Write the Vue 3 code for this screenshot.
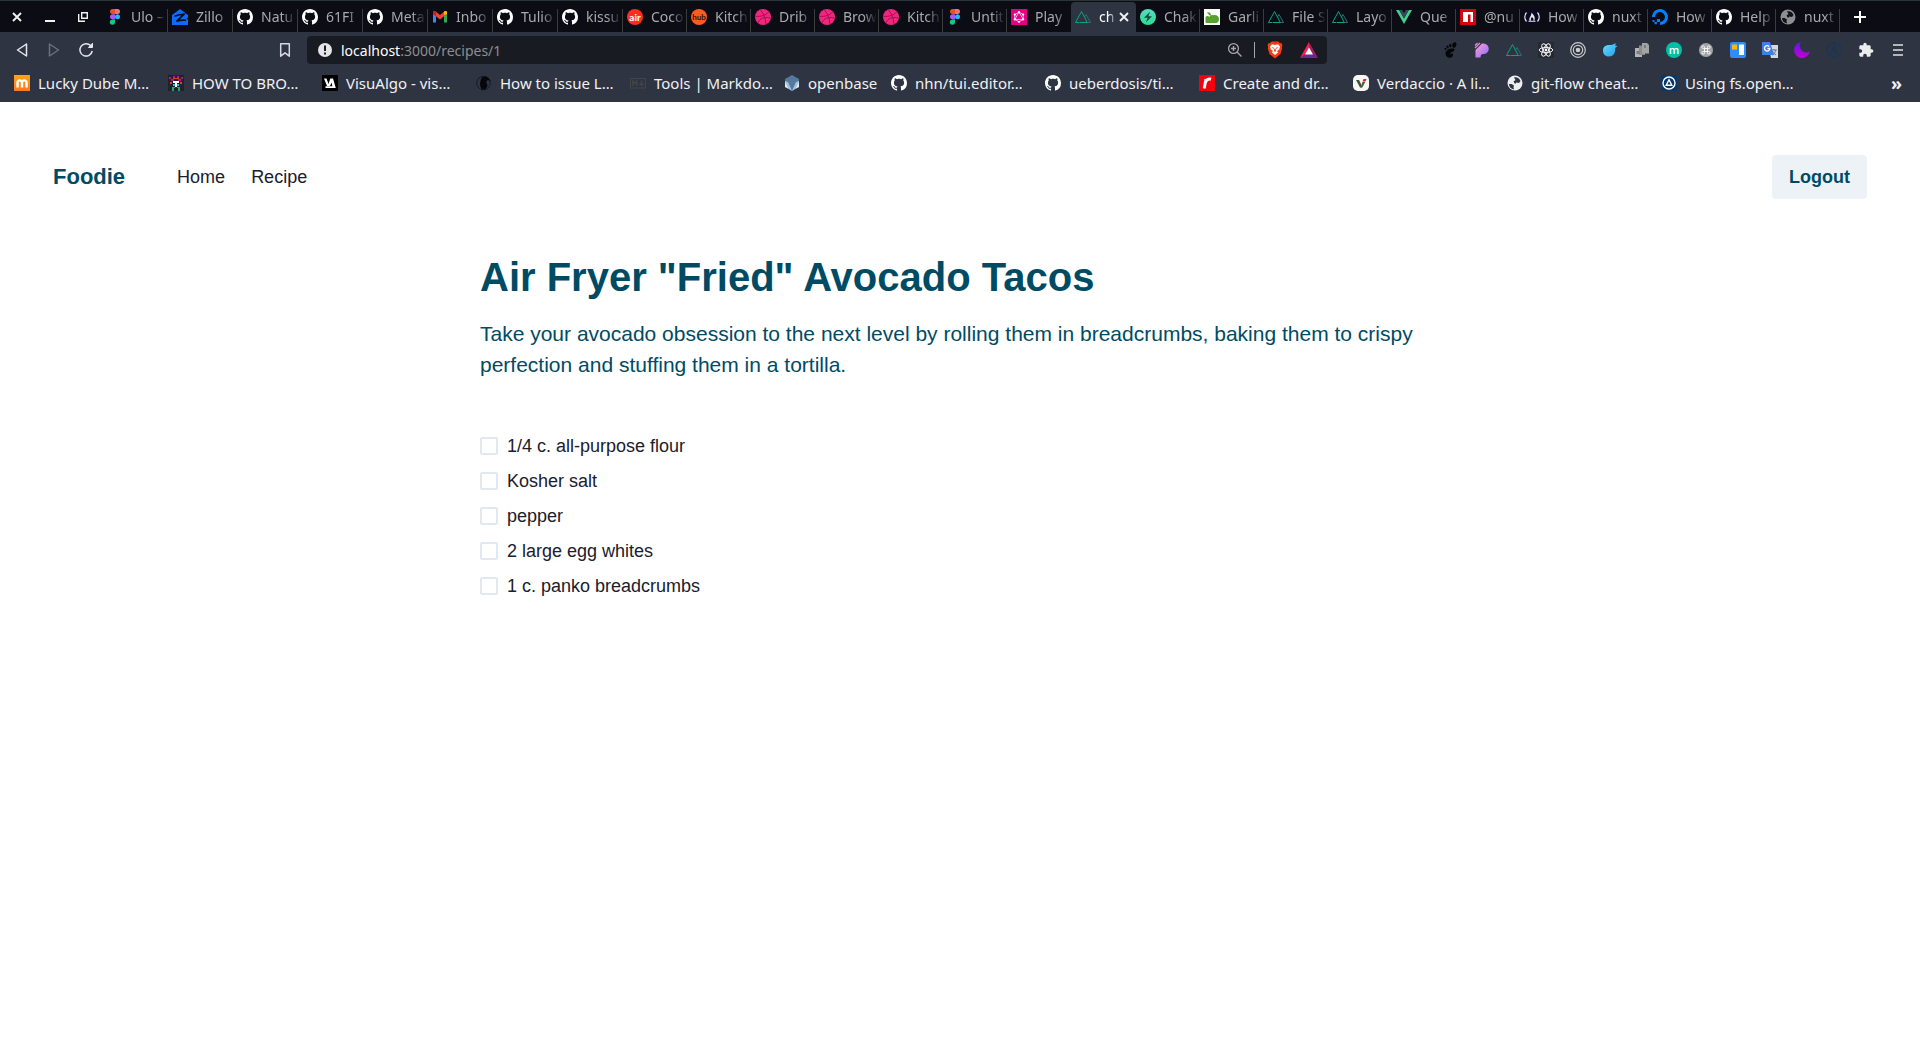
<script setup>
import { ref } from 'vue'

const tabs = [
  { icon: 'figma', title: 'Ulo –' },
  { icon: 'zillow', title: 'Zillo' },
  { icon: 'github', title: 'Natu' },
  { icon: 'github', title: '61FI' },
  { icon: 'github', title: 'Meta' },
  { icon: 'gmail', title: 'Inbo' },
  { icon: 'github', title: 'Tulio' },
  { icon: 'github', title: 'kissu' },
  { letters: 'air', title: 'Coco' },
  { letters: 'hub', title: 'Kitch' },
  { icon: 'dribbble', title: 'Drib' },
  { icon: 'dribbble', title: 'Brow' },
  { icon: 'dribbble', title: 'Kitch' },
  { icon: 'figma', title: 'Untit' },
  { icon: 'graphql', title: 'Play' },
  { icon: 'nuxt', title: 'ch', active: true },
  { icon: 'chakra', title: 'Chak' },
  { icon: 'garlic', title: 'Garli' },
  { icon: 'nuxt', title: 'File S' },
  { icon: 'nuxt', title: 'Layo' },
  { icon: 'vue', title: 'Que' },
  { icon: 'npm', title: '@nu' },
  { icon: 'fcc', title: 'How' },
  { icon: 'github', title: 'nuxt' },
  { icon: 'ocean', title: 'How' },
  { icon: 'github', title: 'Help' },
  { icon: 'globe', title: 'nuxt' },
]

const bookmarks = [
  { icon: 'mdown', title: 'Lucky Dube M…' },
  { icon: 'pixel', title: 'HOW TO BRO…' },
  { icon: 'visualgo', title: 'VisuAlgo - vis…' },
  { icon: 'raven', title: 'How to issue L…' },
  { icon: 'markdown', title: 'Tools | Markdo…' },
  { icon: 'openbase', title: 'openbase', short: true },
  { icon: 'github', title: 'nhn/tui.editor…' },
  { icon: 'github', title: 'ueberdosis/ti…' },
  { icon: 'red-r', title: 'Create and dr…' },
  { icon: 'verdaccio', title: 'Verdaccio · A li…' },
  { icon: 'globe-light', title: 'git-flow cheat…' },
  { icon: 'fs', title: 'Using fs.open…' },
]

const extensions = [
  { icon: 'gnome' },
  { icon: 'pdot' },
  { icon: 'nuxt' },
  { icon: 'react' },
  { icon: 'target' },
  { icon: 'bird' },
  { icon: 'copies' },
  { letters: 'm' },
  { icon: 'command' },
  { icon: 'board' },
  { icon: 'translate' },
  { icon: 'moon' },
  { icon: 'apollo' },
  { icon: 'puzzle' },
]

const path = ref(':3000/recipes/1')

const ingredients = ref([
  { name: '1/4 c. all-purpose flour', checked: false },
  { name: 'Kosher salt', checked: false },
  { name: 'pepper', checked: false },
  { name: '2 large egg whites', checked: false },
  { name: '1 c. panko breadcrumbs', checked: false },
])
</script>

<template>
  <svg class="sprite" aria-hidden="true">
    <defs>
      <linearGradient id="g-chakra" x1="0" y1="0" x2="0" y2="1"><stop offset="0" stop-color="#5bd9c4" /><stop offset="1" stop-color="#27dd8e" /></linearGradient>
      <linearGradient id="g-pdot" x1="0" y1="0" x2="1" y2="1"><stop offset="0" stop-color="#ff9ed2" /><stop offset="1" stop-color="#8c6cff" /></linearGradient>
      <linearGradient id="g-moon" x1="0" y1="0" x2="0" y2="1"><stop offset="0" stop-color="#5a1be8" /><stop offset="1" stop-color="#c400d6" /></linearGradient>
      <linearGradient id="g-bird" x1="0" y1="0" x2="1" y2="1"><stop offset="0" stop-color="#6fdcff" /><stop offset="1" stop-color="#1b9fe8" /></linearGradient>
      <linearGradient id="g-mdown" x1="0" y1="0" x2="0" y2="1"><stop offset="0" stop-color="#ffa21a" /><stop offset="1" stop-color="#ff7a1a" /></linearGradient>
    </defs>
    <symbol id="i-figma" viewBox="0 0 16 16">
      <path d="M5.500 0H8v5H5.500a2.500 2.500 0 0 1 0-5z" fill="#f24e1e" />
      <path d="M8 0h2.500a2.500 2.500 0 0 1 0 5H8z" fill="#ff7262" />
      <path d="M5.500 5.300H8v5H5.500a2.500 2.500 0 0 1 0-5z" fill="#a259ff" />
      <circle cx="10.500" cy="7.800" r="2.500" fill="#1abcfe" />
      <path d="M5.500 10.600H8v2.700a2.600 2.600 0 1 1-2.500-2.700z" fill="#0acf83" />
    </symbol>
    <symbol id="i-zillow" viewBox="0 0 16 16">
      <path d="M8 0l8 6v2.500L14.500 10v.500L16 10v6H0V6z" fill="#0a6cff" />
      <path d="M2.500 7.300C6 5.800 9 5.200 12 5.200L4.500 12.300c3.500-1.200 6.500-1.300 9.500-1" fill="none" stroke="#0b0c14" stroke-width="1.600" />
    </symbol>
    <symbol id="i-github" viewBox="0 0 16 16">
      <path fill="#fff" d="M8 0C3.580 0 0 3.580 0 8c0 3.540 2.290 6.530 5.470 7.590.4.070.55-.17.55-.38 0-.19-.01-.82-.01-1.490-2.010.37-2.530-.49-2.690-.94-.09-.23-.48-.94-.82-1.130-.28-.15-.68-.52-.01-.53.63-.01 1.080.58 1.230.82.72 1.210 1.870.87 2.330.66.07-.52.28-.87.51-1.070-1.780-.2-3.640-.89-3.640-3.950 0-.87.31-1.590.82-2.150-.08-.2-.36-1.020.08-2.120 0 0 .67-.21 2.200.82.64-.18 1.320-.27 2-.27s1.360.09 2 .27c1.530-1.040 2.200-.82 2.200-.82.44 1.100.16 1.920.08 2.120.51.56.82 1.270.82 2.150 0 3.070-1.870 3.750-3.650 3.950.29.25.54.73.54 1.480 0 1.070-.01 1.930-.01 2.200 0 .21.15.46.55.38A8.010 8.010 0 0 0 16 8c0-4.420-3.580-8-8-8z" />
    </symbol>
    <symbol id="i-gmail" viewBox="0 0 16 16">
      <path d="M1 4v9.500h3V6z" fill="#4285f4" /><path d="M15 4v9.500h-3V6z" fill="#34a853" />
      <path d="M1 5V3.500C1 2 2.700 1.700 3.700 2.400L8 6l4.300-3.600C13.300 1.700 15 2 15 3.500V5l-7 5.500z" fill="#ea4335" />
      <path d="M12 6V2.600l.3-.2C13.300 1.700 15 2 15 3.500V5z" fill="#fbbc04" /><path d="M1 5V3.500C1 2.500 1.700 2 2.500 2L4 3v4.400z" fill="#c5221f" />
    </symbol>
    <symbol id="i-dribbble" viewBox="0 0 16 16">
      <circle cx="8" cy="8" r="8" fill="#f2257f" />
      <g fill="none" stroke="#a3114f" stroke-width="1"><path d="M5.500 1c3.500 4 5 8.500 5.500 14M.8 7.500C6 7.500 11 6.500 13.600 3M3 13.700C5 9 10 7.500 15.200 9" /></g>
    </symbol>
    <symbol id="i-graphql" viewBox="0 0 16 16">
      <path d="M0 0h16v16H0z" fill="#e10086" />
      <g fill="none" stroke="#fff" stroke-width=".7"><path d="M8 3.200l4.200 2.400v4.800L8 12.800l-4.200-2.400V5.600zM8 3.200l4.200 7.200H3.800z" /></g>
      <g fill="#fff"><circle cx="8" cy="3.200" r="1.100" /><circle cx="12.200" cy="5.600" r="1.100" /><circle cx="12.200" cy="10.400" r="1.100" /><circle cx="8" cy="12.800" r="1.100" /><circle cx="3.800" cy="10.400" r="1.100" /><circle cx="3.800" cy="5.600" r="1.100" /></g>
    </symbol>
    <symbol id="i-nuxt" viewBox="0 0 16 16">
      <path d="M11.500 13.500h4L11 5.500 9.300 8.300" fill="none" stroke="#2f6d75" stroke-width="1" stroke-linejoin="round" />
      <path d="M4.500 13.500h-4L6.500 2.500l3 5.500 2.700 5.500H5" fill="none" stroke="#0aa57c" stroke-width="1" stroke-linejoin="round" />
    </symbol>
    <symbol id="i-chakra" viewBox="0 0 16 16"><circle cx="8" cy="8" r="8" fill="url(#g-chakra)" /><path d="M10 2.800L4 8.800h3.600L6 13.200l6-6H8.400z" fill="#174a3c" /></symbol>
    <symbol id="i-garlic" viewBox="0 0 16 16">
      <path d="M0 0h16v16H0z" fill="#fff" /><path d="M1.500 13V8c1-1.500 3-1 4 0 0-1.500 2-2.500 4-1.800C12 5.500 15 7 15 10c0 2.500-1.500 4-3 4H3c-1 0-1.500-.5-1.500-1zM3 3.500c2-.5 3.500 0 4 2.500L5.500 6.500z" fill="#57a032" />
    </symbol>
    <symbol id="i-vue" viewBox="0 0 16 16"><path d="M0 1h3.200L8 9.400 12.800 1H16L8 15z" fill="#41d18f" /><path d="M3.200 1h3L8 4.200 9.800 1h3L8 9.400z" fill="#35495e" /></symbol>
    <symbol id="i-npm" viewBox="0 0 16 16"><path d="M0 0h16v16H0z" fill="#d8000c" /><path d="M3 3h10v10h-2.500V5.500H8V13H3z" fill="#fff" /></symbol>
    <symbol id="i-fcc" viewBox="0 0 16 16">
      <path d="M0 0h16v16H0z" fill="#0a0a23" />
      <path d="M2.500 3.500C.2 6 .2 10 2.500 12.500M13.500 3.500c2.300 2.500 2.300 6.500 0 9" fill="none" stroke="#e8e8ee" stroke-width="1.200" />
      <path d="M7.500 3.500c2.500 2.500 4 5 3 8h-1c.3-1.800-.5-2.500-1.500-3.500-.8 1-1.500 2-1 3.500H5.500C4.500 9 7.500 7 7.500 3.500zM4.500 11.700h7v1h-7z" fill="#e8e8ee" />
    </symbol>
    <symbol id="i-ocean" viewBox="0 0 16 16"><path d="M8 16v-3.100c3.300 0 5.800-3.200 4.600-6.600A4.700 4.700 0 0 0 9.700 3.400C6.300 2.200 3.100 4.700 3.100 8H0C0 2.800 5.100-1.300 10.500.4c2.400.7 4.300 2.700 5.100 5.100C17.300 10.900 13.200 16 8 16zM4.900 9.900H8v3H4.900zM2.500 12.900h2.400v2.400H2.500zM.5 10.900h2v2h-2z" fill="#0080ff" /></symbol>
    <symbol id="i-globe" viewBox="0 0 16 16"><circle cx="8" cy="8" r="7.500" fill="#8e8f92" /><path d="M2 9l2.500 0 2.500 1.500L6.500 12 7 14.500C4 14 2 12 2 9zM7 2.500c3-.7 5.500 1 6.500 3.500L12 8l-2.500-.5L8 9 6.500 6.500 8.500 5z" fill="#101118" /></symbol>
    <symbol id="i-globe-light" viewBox="0 0 16 16"><circle cx="8" cy="8" r="7.500" fill="#eceef0" /><path d="M2 9l2.500 0 2.500 1.500L6.500 12 7 14.500C4 14 2 12 2 9zM7 2.500c3-.7 5.500 1 6.500 3.500L12 8l-2.500-.5L8 9 6.500 6.500 8.500 5z" fill="#2f3443" /></symbol>
    <symbol id="i-mdown" viewBox="0 0 16 16"><path d="M0 0h16v16H0z" fill="url(#g-mdown)" /><path d="M3.500 12.500V7.200a2.300 2.300 0 0 1 4.500 0v5.300M8 7.200a2.300 2.300 0 0 1 4.500 0v5.300" fill="none" stroke="#fff" stroke-width="2.400" /></symbol>
    <symbol id="i-pixel" viewBox="0 0 16 16">
      <path d="M0 0h16v16H0z" fill="#20222e" />
      <path d="M1 2h2v2H1zM5 1h2v2H5zM9 1h2v2H9zM13 2h2v2h-2zM3 4h3v2H3zM10 4h3v2h-3z" fill="#c0108c" />
      <path d="M5 6h6v2H9v4H7V8H5z" fill="#fff" /><path d="M2 7h2v2H2zM12 7h2v2h-2zM5 3h6v1H5z" fill="#e0401c" />
      <path d="M5 9h2v2H5zM9 9h2v2H9z" fill="#24b8d8" /><path d="M4 12h3v1H6v3H4zM9 12h3v4h-2v-3H9z" fill="#18b070" />
    </symbol>
    <symbol id="i-visualgo" viewBox="0 0 16 16"><path d="M0 0h16v16H0z" fill="#000" /><path d="M2 3.500h2.500l2 5.500 1.800-5.500H11L13.800 13H3.500v-1.800h6.800L9.600 7.500 8 11H5z" fill="#fff" /></symbol>
    <symbol id="i-raven" viewBox="0 0 16 16"><circle cx="7.500" cy="8" r="6.800" fill="none" stroke="#171b26" /><path d="M6.500 2C10 .5 13 2 14.500 6.500 12.500 4.500 11 5 10.500 6.500c-.5 2 2 3.500.5 5.500L8.500 15.500 8 13.500l-1.500 1.800C4 12.500 3.500 9 4.500 6 5 4 5.500 2.600 6.500 2z" fill="#06070a" /></symbol>
    <symbol id="i-markdown" viewBox="0 0 16 16"><rect x=".5" y="3.500" width="15" height="9.500" fill="none" stroke="#434445" /><path d="M2.800 11V6l2 2.500 2-2.500v5M11.500 5.500V10M9.500 8.500l2 2 2-2" fill="none" stroke="#434445" stroke-width="1.400" /></symbol>
    <symbol id="i-openbase" viewBox="0 0 16 16"><path d="M8 0l7 4v8l-7 4-7-4V4z" fill="#54799f" /><path d="M1 6l4 8-4-2zM15 6l-4 8 4-2z" fill="#dfeaf5" /><path d="M1 6l3 1 4 9-3-2zM15 6l-3 1-4 9 3-2z" fill="#a8c3de" /></symbol>
    <symbol id="i-red-r" viewBox="0 0 16 16"><path d="M0 0h16v16H0z" fill="#f5000c" /><path d="M5.200 13.500L7 4M6.300 8C7 5 9 3.400 12 4.300" fill="none" stroke="#fff" stroke-width="3" /></symbol>
    <symbol id="i-verdaccio" viewBox="0 0 16 16"><rect width="16" height="16" rx="5" fill="#f7f8f6" /><path d="M3 5h3l2 4 1 3.500H7z" fill="#405236" /><path d="M9.500 7h2.800l-3 5.500H7.500z" fill="#4a5e44" /><path d="M10.500 4h3L12.500 6.500H9.500z" fill="#e02414" /></symbol>
    <symbol id="i-fs" viewBox="0 0 16 16"><path d="M0 0h16v16H0z" fill="#033a6b" /><circle cx="8" cy="8" r="6" fill="none" stroke="#fff" stroke-width="1.400" /><path d="M8 4.800l2.800 5.400H5.200z" fill="none" stroke="#fff" stroke-width="1.400" /></symbol>
    <symbol id="i-gnome" viewBox="0 0 16 16">
      <g fill="#050608"><ellipse cx="12.300" cy="3" rx="2" ry="2.800" transform="rotate(20 12.300 3)" /><ellipse cx="8.300" cy="3.600" rx="1.200" ry="1.800" /><ellipse cx="5.600" cy="5" rx="1" ry="1.500" transform="rotate(-20 5.600 5)" /><ellipse cx="3.500" cy="7" rx=".9" ry="1.200" transform="rotate(-30 3.500 7)" /></g>
      <path d="M12.500 7C9 5.500 3.500 8 3.500 11.500c0 2.500 2 4.300 4 4.300 2.300 0 4-1.600 3.600-3.500-.3-1.300-2-1-2.400.1-1-.8 0-1.800 1.300-2.400 1.500-.6 3-1.800 2.500-3z" fill="#050608" />
    </symbol>
    <symbol id="i-pdot" viewBox="0 0 16 16"><path d="M1.500 8L8 1.500h1.500a5 5 0 0 1 0 10.500C7 12 7 13 6.500 15.500h-5z" fill="url(#g-pdot)" /><path d="M1 3.500L3.500 1M1 6l5-5" stroke="#e58bdc" stroke-width="1.200" /></symbol>
    <symbol id="i-react" viewBox="0 0 16 16"><path d="M0 0h16v16H0z" fill="#262932" /><g fill="none" stroke="#f4f4f4"><ellipse cx="8" cy="8" rx="6.800" ry="2.600" /><ellipse cx="8" cy="8" rx="6.800" ry="2.600" transform="rotate(60 8 8)" /><ellipse cx="8" cy="8" rx="6.800" ry="2.600" transform="rotate(120 8 8)" /></g><circle cx="8" cy="8" r="1.400" fill="#fff" /></symbol>
    <symbol id="i-target" viewBox="0 0 16 16"><g fill="none" stroke="#c9cacc" stroke-width="1.200"><circle cx="8" cy="8" r="7.300" /><circle cx="8" cy="8" r="4.700" /></g><circle cx="8" cy="8" r="2.300" fill="#c9cacc" /></symbol>
    <symbol id="i-bird" viewBox="0 0 16 16"><path d="M1 8.500c0-4 3-5.500 6.500-5.500 2 0 3.500-.5 6.500-1.800L13 3.500l2.500.5-2.300 2c.5 5-2.200 8.500-6.200 8.500S1 12 1 8.500z" fill="url(#g-bird)" /></symbol>
    <symbol id="i-copies" viewBox="0 0 16 16"><path d="M1 6h7v9H1z" fill="#b4b4b4" /><path d="M5 3.500h6V13H5z" fill="#8d8d8d" /><path d="M8 1h5l2 2v8.500H8z" fill="#a3a3a3" /><path d="M2.500 9h3v3h-3zM10 3h2v3h-2z" fill="#7c7c7c" /></symbol>
    <symbol id="i-command" viewBox="0 0 16 16"><circle cx="8" cy="8" r="7" fill="#a5a5a5" /><path d="M6.500 6.500h3v3h-3zM6.500 6.500H5.300a1.300 1.300 0 1 1 1.200-1.200zM9.500 6.500V5.300a1.300 1.300 0 1 1 1.200 1.200zM9.500 9.500h1.200a1.300 1.300 0 1 1-1.200 1.200zM6.500 9.500v1.200a1.300 1.300 0 1 1-1.200-1.200z" fill="none" stroke="#f6f6f6" stroke-width="1" /></symbol>
    <symbol id="i-board" viewBox="0 0 16 16"><rect width="16" height="16" rx="2" fill="#2f8cff" /><path d="M2 2.500h5v5H2z" fill="#ffb800" /><path d="M9 2.500h5v10.500H9z" fill="#fff" /></symbol>
    <symbol id="i-translate" viewBox="0 0 16 16"><path d="M6 3h10v13H9z" fill="#d5d9df" /><path d="M9.500 8h5.500M12 7v1M10.500 13c2-1 3-3 3-5M10.500 9c.8 2 2 3 3.500 4" stroke="#61788f" fill="none" /><path d="M0 0h8l4 13H0z" fill="#3f7fe8" /><path d="M7.200 4.500a2.700 2.700 0 1 0 .7 2H5.400" fill="none" stroke="#fff" stroke-width="1.300" /></symbol>
    <symbol id="i-moon" viewBox="0 0 16 16"><path d="M7 0A6.700 6.700 0 0 0 15.900 9.500 8 8 0 1 1 7 0z" fill="url(#g-moon)" /></symbol>
    <symbol id="i-apollo" viewBox="0 0 16 16"><circle cx="8" cy="8" r="7.300" fill="none" stroke="#193654" stroke-width="1.200" /><path d="M5 12l3-8 3 8M6.500 9.500h3" fill="none" stroke="#193654" stroke-width="1.900" /></symbol>
    <symbol id="i-puzzle" viewBox="0 0 24 24"><path fill="#eceded" d="M20.500 11H19V7c0-1.100-.9-2-2-2h-4V3.500C13 2.120 11.880 1 10.500 1S8 2.120 8 3.500V5H4c-1.100 0-1.990.9-1.990 2v3.800H3.500c1.490 0 2.700 1.210 2.700 2.700s-1.210 2.700-2.700 2.700H2V20c0 1.100.9 2 2 2h3.800v-1.500c0-1.490 1.210-2.700 2.700-2.700 1.490 0 2.700 1.210 2.700 2.700V22H17c1.100 0 2-.9 2-2v-4h1.500c1.380 0 2.500-1.120 2.500-2.500S21.880 11 20.500 11z" /></symbol>
    <symbol id="i-lion" viewBox="0 0 16 18">
      <path d="M4.500.5h7l1.500 1.700 1.500-.2 1 2.500-.7 1.700.4 1.200L13.500 13 8 17.500 2.500 13 .8 7.400l.4-1.200-.7-1.700 1-2.500 1.500.2z" fill="#fb3a14" />
      <path d="M5 3.200L8 4l3-.8 2 2.300-.8 3L10 10l1 1.500-3 2.500-3-2.500L6 10 3.800 8.500 3 5.500z" fill="#fff" /><path d="M4.500 6l2.500.8-.5 1.200zM11.500 6L9 6.800l.5 1.200zM7.500 7.500h1L9 10l-1 1-1-1z" fill="#fb3a14" />
    </symbol>
    <symbol id="i-bat" viewBox="0 0 18 16"><path d="M9 0L0 16l9-6z" fill="#ff1f4b" /><path d="M9 0l9 16-9-6z" fill="#9e1f63" /><path d="M0 16h18l-9-6z" fill="#662d91" /><path d="M9 5.500l4 7H5z" fill="#fff" /></symbol>
    <symbol id="i-close" viewBox="0 0 16 16"><path d="M4 4l8 8M12 4l-8 8" stroke="#f2f2f2" stroke-width="1.900" /></symbol>
    <symbol id="i-minimize" viewBox="0 0 16 16"><path d="M3 12h10" stroke="#f2f2f2" stroke-width="2" /></symbol>
    <symbol id="i-restore" viewBox="0 0 16 16"><path d="M6.700 3.700h5.600v5.600H6.700zM3.700 5v7.300H10" fill="none" stroke="#f2f2f2" stroke-width="1.400" /></symbol>
    <symbol id="i-plus" viewBox="0 0 16 16"><path d="M8 2v12M2 8h12" stroke="#fff" stroke-width="2" /></symbol>
    <symbol id="i-back" viewBox="0 0 16 16"><path d="M12.500 2v12L3.500 8z" fill="none" stroke="#e6e7ea" stroke-width="1.500" stroke-linejoin="round" /></symbol>
    <symbol id="i-forward" viewBox="0 0 16 16"><path d="M3.500 2v12l9-6z" fill="none" stroke="#6c7079" stroke-width="1.500" stroke-linejoin="round" /></symbol>
    <symbol id="i-reload" viewBox="0 0 16 16"><path d="M12.600 3.600A6.200 6.200 0 1 0 14.200 9" fill="none" stroke="#e6e7ea" stroke-width="1.500" /><path d="M10.500 5.500h4V1.200z" fill="#e6e7ea" stroke="#e6e7ea" stroke-linejoin="round" /></symbol>
    <symbol id="i-ribbon" viewBox="0 0 16 16"><path d="M3.700 1.700h8.600v12.500L8 10.800l-4.300 3.400z" fill="none" stroke="#d6d8db" stroke-width="1.500" stroke-linejoin="round" /></symbol>
    <symbol id="i-info" viewBox="0 0 16 16"><circle cx="8" cy="8" r="7" fill="#e6e6e6" /><path d="M7 3.500h2V9H7zM7 10.500h2v2H7z" fill="#191b22" /></symbol>
    <symbol id="i-magnify" viewBox="0 0 16 16"><path d="M10 10l4.500 4.500M4 6.500h5M6.500 4v5" stroke="#a6a7aa" stroke-width="1.400" /><circle cx="6.500" cy="6.500" r="4.900" fill="none" stroke="#a6a7aa" stroke-width="1.300" /></symbol>
    <symbol id="i-menu" viewBox="0 0 16 16"><path d="M3 3h10M3 8h10M3 13h10" stroke="#e0e1e3" stroke-width="1.600" /></symbol>
  </svg>

  <header class="browser">
    <div class="tab-strip">
      <div class="window-controls">
        <button type="button" aria-label="Close window"><svg class="icon"><use href="#i-close" /></svg></button>
        <button type="button" aria-label="Minimize"><svg class="icon"><use href="#i-minimize" /></svg></button>
        <button type="button" aria-label="Restore"><svg class="icon"><use href="#i-restore" /></svg></button>
      </div>
      <div
        v-for="(tab, i) in tabs"
        :key="i"
        class="tab"
        :class="{ wide: i < 8, active: tab.active, 'before-active': tabs[i + 1]?.active }"
      >
        <button type="button" class="tab-button">
          <span v-if="tab.letters" class="letters" :class="tab.letters">{{ tab.letters }}</span>
          <svg v-else class="icon" aria-hidden="true"><use :href="'#i-' + tab.icon" /></svg>
          <span class="tab-title">{{ tab.title }}</span>
        </button>
        <button v-if="tab.active" type="button" class="tab-close" aria-label="Close tab">
          <svg class="icon"><use href="#i-close" /></svg>
        </button>
      </div>
      <button type="button" class="new-tab" aria-label="New tab"><svg class="icon"><use href="#i-plus" /></svg></button>
    </div>

    <div class="toolbar">
      <div class="navigation">
        <button type="button" aria-label="Back"><svg class="icon"><use href="#i-back" /></svg></button>
        <button type="button" aria-label="Forward"><svg class="icon"><use href="#i-forward" /></svg></button>
        <button type="button" aria-label="Reload"><svg class="icon"><use href="#i-reload" /></svg></button>
      </div>
      <button type="button" class="save-page" aria-label="Bookmark this page"><svg class="icon"><use href="#i-ribbon" /></svg></button>
      <div class="address">
        <svg class="icon" aria-hidden="true"><use href="#i-info" /></svg>
        <label for="address-path" class="host">localhost</label>
        <input id="address-path" v-model="path" type="text" spellcheck="false">
        <button type="button" aria-label="Zoom"><svg class="icon"><use href="#i-magnify" /></svg></button>
        <span class="divider"></span>
        <button type="button" aria-label="Brave Shields"><svg class="icon-large"><use href="#i-lion" /></svg></button>
        <button type="button" class="rewards" aria-label="Brave Rewards"><svg class="icon-large"><use href="#i-bat" /></svg></button>
      </div>
      <div class="extensions">
        <button v-for="(item, i) in extensions" :key="i" type="button" :aria-label="item.icon || item.letters">
          <span v-if="item.letters" class="letters" :class="item.letters">{{ item.letters }}</span>
          <svg v-else class="icon"><use :href="'#i-' + item.icon" /></svg>
        </button>
        <button type="button" aria-label="Menu"><svg class="icon"><use href="#i-menu" /></svg></button>
      </div>
    </div>

    <nav class="bookmarks" aria-label="Bookmarks">
      <a v-for="mark in bookmarks" :key="mark.title" href="#" :class="{ short: mark.short }">
        <svg class="icon" aria-hidden="true"><use :href="'#i-' + mark.icon" /></svg>
        <span>{{ mark.title }}</span>
      </a>
      <button type="button" class="more">»</button>
    </nav>
  </header>

  <nav class="navbar">
    <a href="#" class="brand">Foodie</a>
    <a href="#">Home</a>
    <a href="#">Recipe</a>
    <button type="button" class="logout">Logout</button>
  </nav>
  <main class="recipe">
    <h1>Air Fryer "Fried" Avocado Tacos</h1>
    <p>Take your avocado obsession to the next level by rolling them in breadcrumbs, baking them to crispy perfection and stuffing them in a tortilla.</p>
    <ul>
      <li v-for="item in ingredients" :key="item.name">
        <label><input v-model="item.checked" type="checkbox">{{ item.name }}</label>
      </li>
    </ul>
  </main>
</template>

<style>
body {
  background: #fff;
}
</style>

<style scoped>
* {
  box-sizing: border-box;
}

.sprite {
  position: absolute;
  width: 0;
  height: 0;
}

button {
  padding: 0;
  border: 0;
  background: none;
  color: inherit;
  font: inherit;
  cursor: pointer;
}

a {
  color: inherit;
  text-decoration: none;
}

.icon {
  display: block;
  flex: none;
  width: 16px;
  height: 16px;
}

.icon-large {
  display: block;
  width: 18px;
  height: 18px;
}

.letters {
  display: flex;
  flex: none;
  align-items: center;
  justify-content: center;
  width: 16px;
  height: 16px;
  border-radius: 8px;
  color: #fff;
  font-family: Lato, sans-serif;
  font-size: 10px;
  font-weight: 700;
  line-height: 14px;
}

.letters.air {
  background: #ff2d1f;
}

.letters.hub {
  background: #ff5a1f;
  color: #2b1010;
  font-size: 8px;
}

.letters.m {
  background: #00bfa8;
  font-family: "Open Sans", sans-serif;
  font-size: 11px;
  font-weight: 600;
}

.browser {
  background: #2f3443;
  color: #f0f1f3;
  font-family: "Noto Sans", "Open Sans", sans-serif;
  font-size: 14px;
}

.tab-strip {
  display: flex;
  height: 32px;
  padding-top: 1px;
  border-top: 1px solid #2b3437;
  background: #0b0c14;
}

.window-controls {
  display: flex;
  flex: none;
  gap: 17px;
  width: 103px;
  padding-left: 9px;
}

.tab {
  display: flex;
  flex: none;
  align-items: center;
  width: 64px;
  padding: 0 2px 0 4px;
  background: linear-gradient(#3c3c3f, #3c3c3f) right bottom / 1px 23px no-repeat;
  color: #a9aaad;
}

.tab.wide {
  width: 65px;
}

.tab.before-active {
  background: none;
}

.tab.active {
  width: 65px;
  padding-right: 4px;
  border-radius: 4px 4px 0 0;
  background: #2f3443;
  color: #fff;
}

.tab-button {
  display: flex;
  flex: 1;
  align-items: center;
  gap: 8px;
  min-width: 0;
}

.tab-title {
  flex: 1;
  min-width: 0;
  line-height: 20px;
  text-align: left;
  white-space: nowrap;
  mask-image: linear-gradient(to right, #000 60%, transparent);
}

.new-tab {
  padding: 0 12px;
}

.toolbar {
  display: flex;
  align-items: center;
  height: 36px;
  padding: 0 14px;
}

.navigation {
  display: flex;
  gap: 16px;
}

.save-page {
  margin-left: auto;
}

.address {
  display: flex;
  align-items: center;
  width: 1020px;
  height: 28px;
  margin-left: 14px;
  padding: 0 9px 0 10px;
  border-radius: 4px;
  background: #191b22;
}

.host {
  margin-left: 8px;
  color: #fff;
}

.address input {
  flex: 1;
  min-width: 0;
  padding: 0;
  border: 0;
  outline: 0;
  background: none;
  color: #8d8e91;
  font: inherit;
}

.divider {
  width: 1px;
  height: 16px;
  margin: 0 11px;
  background: #a6a7aa;
}

.rewards {
  margin-left: 16px;
}

.extensions {
  display: flex;
  gap: 16px;
  margin-left: 115px;
}

.bookmarks {
  display: flex;
  align-items: center;
  height: 34px;
  padding: 0 18px 4px 14px;
  font-size: 15px;
  line-height: 20px;
}

.bookmarks a {
  display: flex;
  flex: none;
  align-items: center;
  gap: 8px;
  width: 154px;
  white-space: nowrap;
}

.bookmarks a.short {
  width: 107px;
}

.more {
  margin-left: auto;
  font-size: 18px;
  font-weight: 700;
}

.navbar,
.recipe {
  color: #1a202c;
  font-family: "Liberation Sans", Arial, sans-serif;
  font-size: 18px;
  line-height: 28px;
}

.navbar {
  display: flex;
  align-items: center;
  gap: 26px;
  padding: 53px;
}

.brand {
  margin-right: 26px;
  color: #004b64;
  font-size: 22px;
  font-weight: 700;
}

.logout {
  height: 44px;
  margin-left: auto;
  padding: 0 17px;
  border-radius: 4px;
  background: #edf2f7;
  color: #004b64;
  font-weight: 700;
}

.recipe {
  width: 50%;
  min-width: 320px;
  margin: 0 auto;
}

.recipe h1 {
  margin: 0;
  color: #004b64;
  font-size: 40px;
  line-height: 50px;
}

.recipe p {
  margin: 16px 0 52px;
  color: #004b64;
  font-size: 21px;
  line-height: 31px;
}

.recipe ul {
  margin: 0;
  padding: 0;
  list-style: none;
}

.recipe li {
  height: 35px;
}

.recipe label {
  display: flex;
  align-items: center;
  gap: 9px;
  width: fit-content;
}

.recipe input {
  appearance: none;
  width: 18px;
  height: 18px;
  margin: 0;
  border: 2px solid #e2e8f0;
  border-radius: 2px;
}

.recipe input:checked {
  border-color: #3182ce;
  background: #3182ce;
}
</style>
